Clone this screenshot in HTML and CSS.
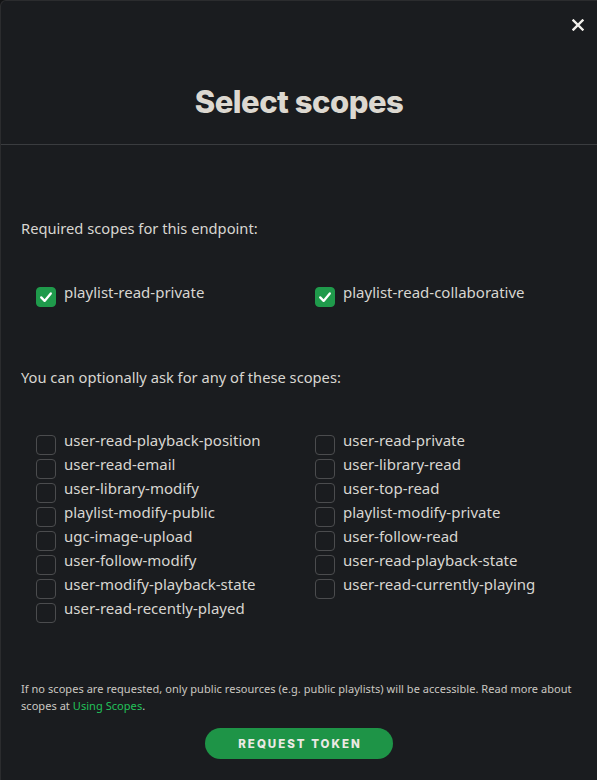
FILE: index.html
```html
<!DOCTYPE html>
<html lang="en">
<head>
<meta charset="utf-8">
<title>Select scopes</title>
<link rel="stylesheet" href="styles.css">
</head>
<body>
<div class="modal">
  <header class="modal-header">
    <button class="close" aria-label="Close">
      <svg width="12" height="12" viewBox="0 0 12 12"><path d="M1.5 1.5 L10.5 10.5 M10.5 1.5 L1.5 10.5" stroke="#f2f0ec" stroke-width="2.4" stroke-linecap="square"/></svg>
    </button>
    <h1 class="title">Select scopes</h1>
  </header>
  <main class="modal-body">
    <p class="section-label required-label">Required scopes for this endpoint:</p>
    <div class="scope-grid required-grid">
      <label class="scope"><span class="box checked"><svg width="20" height="20" viewBox="0 0 20 20"><path d="M5.2 10.4 L8.6 13.9 L14.8 6.4" fill="none" stroke="#fff" stroke-width="2.3" stroke-linecap="round" stroke-linejoin="round"/></svg></span><span class="name">playlist-read-private</span></label>
      <label class="scope"><span class="box checked"><svg width="20" height="20" viewBox="0 0 20 20"><path d="M5.2 10.4 L8.6 13.9 L14.8 6.4" fill="none" stroke="#fff" stroke-width="2.3" stroke-linecap="round" stroke-linejoin="round"/></svg></span><span class="name">playlist-read-collaborative</span></label>
    </div>
    <p class="section-label optional-label">You can optionally ask for any of these scopes:</p>
    <div class="scope-grid optional-grid">
      <label class="scope"><span class="box"></span><span class="name">user-read-playback-position</span></label>
      <label class="scope"><span class="box"></span><span class="name">user-read-email</span></label>
      <label class="scope"><span class="box"></span><span class="name">user-library-modify</span></label>
      <label class="scope"><span class="box"></span><span class="name">playlist-modify-public</span></label>
      <label class="scope"><span class="box"></span><span class="name">ugc-image-upload</span></label>
      <label class="scope"><span class="box"></span><span class="name">user-follow-modify</span></label>
      <label class="scope"><span class="box"></span><span class="name">user-modify-playback-state</span></label>
      <label class="scope"><span class="box"></span><span class="name">user-read-recently-played</span></label>
      <label class="scope"><span class="box"></span><span class="name">user-read-private</span></label>
      <label class="scope"><span class="box"></span><span class="name">user-library-read</span></label>
      <label class="scope"><span class="box"></span><span class="name">user-top-read</span></label>
      <label class="scope"><span class="box"></span><span class="name">playlist-modify-private</span></label>
      <label class="scope"><span class="box"></span><span class="name">user-follow-read</span></label>
      <label class="scope"><span class="box"></span><span class="name">user-read-playback-state</span></label>
      <label class="scope"><span class="box"></span><span class="name">user-read-currently-playing</span></label>
    </div>
    <p class="note">If no scopes are requested, only public resources (e.g. public playlists) will be accessible. Read more about scopes at <a class="link" href="#">Using Scopes</a>.</p>
    <div class="actions">
      <button class="request">REQUEST TOKEN</button>
    </div>
  </main>
</div>
</body>
</html>
```

FILE: styles.css
```css
* { box-sizing: border-box; }
html, body { margin: 0; padding: 0; background: #121314; }
body { width: 597px; height: 780px; overflow: hidden; font-family: "Noto Sans", "Liberation Sans", sans-serif; color: #d8d6d1; }

.modal {
  width: 597px;
  height: 780px;
  background: #1a1c1f;
  border-top: 1px solid #2b2c2e;
  border-left: 1px solid #2b2c2e;
  border-top-left-radius: 6px;
  display: flex;
  flex-direction: column;
}

.modal-header {
  position: relative;
  height: 144px;
  border-bottom: 1px solid #3a3c3f;
  padding-top: 83px;
}

.close {
  position: absolute;
  top: 18px;
  right: 13px;
  width: 12px;
  height: 12px;
  padding: 0;
  border: 0;
  background: transparent;
  display: block;
}
.close svg { display: block; }

.title {
  margin: 0;
  text-align: center;
  font-family: Inter, "Noto Sans", sans-serif;
  font-weight: 800;
  font-size: 31px;
  line-height: 36px;
  letter-spacing: -0.5px;
  color: #dcd8d0;
}

.modal-body {
  padding: 0 21px 0 20px;
  display: flex;
  flex-direction: column;
}

.section-label {
  margin: 0;
  font-size: 14.7px;
  line-height: 20px;
  color: #d8d6d1;
}
.required-label { margin-top: 73px; }
.optional-label { margin-top: 58px; }

.scope-grid {
  display: grid;
  grid-template-columns: 279px 1fr;
  padding-left: 15px;
}
.required-grid { margin-top: 47px; grid-template-rows: 24px; }
.optional-grid {
  margin-top: 46px;
  grid-template-rows: repeat(8, 24px);
  grid-auto-flow: column;
}

.scope {
  display: flex;
  align-items: flex-start;
  gap: 8px;
  height: 24px;
}

.box {
  flex: none;
  width: 20px;
  height: 20px;
  margin-top: 2px;
  border: 1px solid #4b4c4e;
  border-radius: 4px;
}
.box.checked {
  background: #1f9a4b;
  border-color: #1f9a4b;
  position: relative;
}
.box.checked svg { position: absolute; left: -1px; top: -1px; }

.name {
  font-size: 15px;
  line-height: 18px;
  margin-top: -2px;
  color: #d8d6d1;
  white-space: nowrap;
}

.note {
  margin: 55px -10px 0 0;
  font-size: 11px;
  line-height: 17px;
  color: #cbc8c2;
  letter-spacing: 0.05px;
}
.link { color: #22c25a; text-decoration: none; }

.actions {
  display: flex;
  justify-content: center;
  margin-top: 14px;
}
.request {
  width: 188px;
  height: 31px;
  border: 0;
  border-radius: 16px;
  background: #1e9447;
  color: #ebe9e4;
  font-family: Inter, "Noto Sans", sans-serif;
  font-weight: 800;
  font-size: 11.5px;
  letter-spacing: 2px;
  padding: 0 0 0 2px;
  margin-left: 1px;
}
```
